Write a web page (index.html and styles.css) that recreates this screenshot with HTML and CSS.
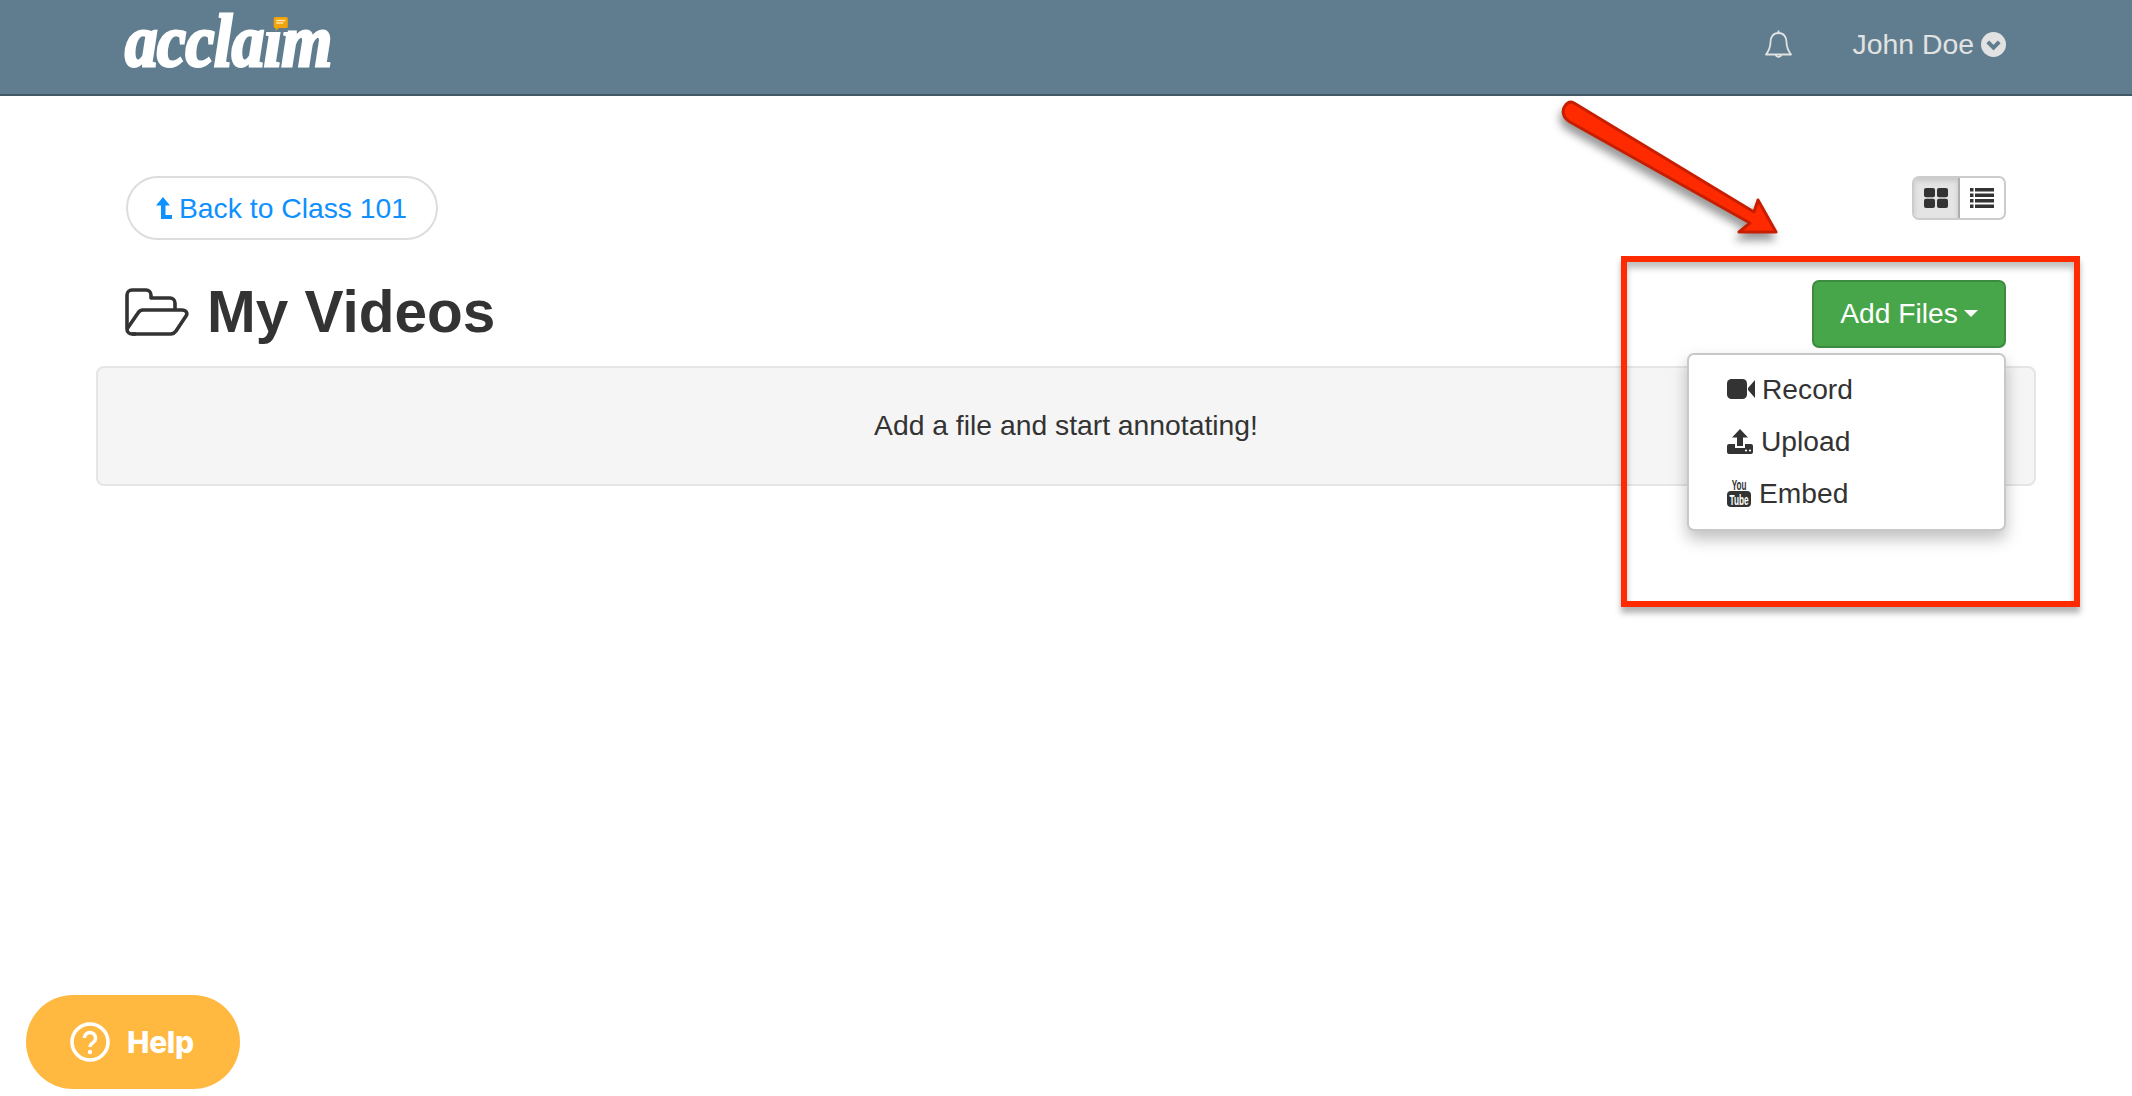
FILE: index.html
```html
<!DOCTYPE html>
<html lang="en">
<head>
<meta charset="utf-8">
<title>My Videos</title>
<link rel="stylesheet" href="styles.css">
</head>
<body>
<header class="topbar">
  <a class="logo">acclaim<svg class="logo-bubble" viewBox="0 0 14 14" preserveAspectRatio="none"><rect x="-8" y="-9" width="22" height="24" fill="#607d8f"/><path d="M1.5 0h11A1.500 1.500 0 0 1 14 1.500v8a1.500 1.500 0 0 1-1.500 1.500H5L2 14v-3h-.5A1.500 1.500 0 0 1 0 9.500v-8A1.500 1.500 0 0 1 1.500 0z" fill="#f0a30a"/><path d="M2.500 3.500h9M2.500 6h7" stroke="#fde3a8" stroke-width="1.300"/></svg></a>
  <div class="topbar-right">
    <svg class="bell" viewBox="0 0 27 29" fill="none" stroke="#e2e2e2" stroke-width="1.800"><path d="M13.500 3c-5.200 0-8 3.800-8 9 0 6-1.700 8.800-4.500 12.500h25c-2.800-3.700-4.500-6.500-4.500-12.500 0-5.200-2.800-9-8-9z" stroke-linejoin="round"/><path d="M13.500 3V.5M10.800 24.800a2.800 2.800 0 0 0 5.400 0"/></svg>
    <span class="user">John Doe</span>
    <svg class="chevron" viewBox="0 0 24 24"><circle cx="12" cy="12" r="12" fill="#e2e2e2"/><path d="M6.500 9.500l5.500 5.500 5.500-5.500" fill="none" stroke="#607d8f" stroke-width="3.800"/></svg>
  </div>
</header>

<main class="page">
  <div class="toolbar">
    <a class="back"><svg class="back-icon" viewBox="0 0 16 22"><path d="M7 0l7 8.500H9.500V18H16v4H5V8.500H0z" fill="#0e90ff"/></svg>Back to Class 101</a>
    <div class="toggle">
      <span class="toggle-btn active"><svg class="toggle-icon" viewBox="0 0 24 20" fill="#333"><rect width="11" height="9.200" rx="2"/><rect x="13" width="11" height="9.200" rx="2"/><rect y="10.800" width="11" height="9.200" rx="2"/><rect x="13" y="10.800" width="11" height="9.200" rx="2"/></svg></span>
      <span class="toggle-btn"><svg class="toggle-icon" viewBox="0 0 24 20" fill="#333"><rect width="3.500" height="3.500"/><rect x="5" width="19" height="3.500"/><rect y="5.500" width="3.500" height="3.500"/><rect x="5" y="5.500" width="19" height="3.500"/><rect y="11" width="3.500" height="3.500"/><rect x="5" y="11" width="19" height="3.500"/><rect y="16.500" width="3.500" height="3.500"/><rect x="5" y="16.500" width="19" height="3.500"/></svg></span>
    </div>
  </div>

  <div class="title-row">
    <h1 class="title"><svg class="folder" viewBox="0 0 64 48" fill="none" stroke="#333" stroke-width="3.600" stroke-linejoin="round"><path d="M11 46H7a5 5 0 0 1-5-5V7a5 5 0 0 1 5-5h14a5 5 0 0 1 5 5v3h19a5 5 0 0 1 5 5v7"/><path d="M2 41l11-16a6 6 0 0 1 5-3h39c4 0 6 3 4 6L51 43a7 7 0 0 1-5 3H7"/></svg>My Videos</h1>
    <div class="dropdown">
      <button class="add-btn">Add Files<span class="caret"></span></button>
      <ul class="menu">
        <li class="menu-item"><svg class="mi-video" viewBox="0 0 28 20" fill="#333"><rect width="20" height="20" rx="4.500"/><path d="M21 9l7-8v18l-7-8z"/></svg><span>Record</span></li>
        <li class="menu-item"><svg class="mi-upload" viewBox="0 0 26 25" fill="#333"><path d="M13 0l8 8.500h-5V17h-6V8.500H5z"/><path d="M2 15h6v4h10v-4h6a2 2 0 0 1 2 2v6a2 2 0 0 1-2 2H2a2 2 0 0 1-2-2v-6a2 2 0 0 1 2-2z"/><circle cx="19" cy="21.500" r="1.100" fill="#fff"/><circle cx="23" cy="21.500" r="1.100" fill="#fff"/></svg><span>Upload</span></li>
        <li class="menu-item"><svg class="mi-yt" viewBox="0 0 24 28"><text class="yt-you" transform="translate(12 11) scale(.58 1)" text-anchor="middle">You</text><rect y="12" width="24" height="16" rx="4" fill="#333"/><text class="yt-tube" transform="translate(12 25.500) scale(.55 1)" text-anchor="middle">Tube</text></svg><span>Embed</span></li>
      </ul>
    </div>
  </div>

  <div class="well">Add a file and start annotating!</div>
</main>

<div class="annot-box"></div>
<svg class="annot-arrow" viewBox="0 0 240 160"><path d="M14 8 L194 117 L198 105 L216 137 L179 137 L190 128 L10 27 C2 22 2 15 5 11 C7 8 10 6 14 8z" fill="#ff2a00" stroke="#c81e00" stroke-width="3" stroke-linejoin="round"/></svg>

<a class="help"><svg class="help-icon" viewBox="0 0 40 40" fill="none" stroke="#fff" stroke-width="3.600"><circle cx="20" cy="20" r="18"/><path d="M14.500 16a5.500 5.500 0 1 1 8.500 4.600c-2 1.300-3 2.200-3 4.400" stroke-width="3.400"/><circle cx="20" cy="30" r="2.200" fill="#fff" stroke="none"/></svg>Help</a>
</body>
</html>
```

FILE: styles.css
```css
* { box-sizing: border-box; }
html, body { margin: 0; height: 100%; }
body {
  background: #fff;
  color: #333;
  font-family: "Liberation Sans", Arial, sans-serif;
  overflow: hidden;
  position: relative;
}

.topbar {
  height: 96px;
  background: #607d8f;
  border-bottom: 2px solid #435866;
  display: flex;
  align-items: center;
  justify-content: space-between;
  padding: 0 126px 0 125px;
}
.logo {
  position: relative;
  color: #fff;
  font-family: "Liberation Serif", serif;
  font-style: italic;
  font-weight: 700;
  font-size: 74px;
  line-height: 74px;
  letter-spacing: -0.5px;
  -webkit-text-stroke: 3px #fff;
  margin-top: -12px;
  transform: scaleX(.88);
  transform-origin: left center;
}
.logo-bubble { position: absolute; left: 169px; top: 13px; width: 16px; height: 14px; overflow: visible; }
.topbar-right { display: flex; align-items: center; padding-bottom: 6px; }
.bell { width: 27px; height: 29px; margin-right: 60px; }
.user { font-size: 28.4px; color: #e2e2e2; margin-right: 7px; }
.chevron { width: 25px; height: 25px; }

.page { padding: 80px 96px 0; }
.toolbar {
  display: flex;
  justify-content: space-between;
  align-items: flex-start;
  padding: 0 30px 0 30px;
}
.back {
  height: 64px;
  width: 312px;
  border: 2px solid #ddd;
  border-radius: 32px;
  color: #0e90ff;
  font-size: 28.3px;
  display: flex;
  align-items: center;
  padding-left: 28px;
}
.back-icon { width: 16px; height: 22px; margin-right: 7px; }
.toggle {
  display: flex;
  width: 94px;
  height: 44px;
  border: 2px solid #ccc;
  border-radius: 7px;
  overflow: hidden;
}
.toggle-btn { flex: 1; display: flex; align-items: center; justify-content: center; }
.toggle-btn.active {
  background: #e4e4e4;
  border-right: 2px solid #adadad;
  box-shadow: inset 0 3px 5px rgba(0,0,0,.125);
}
.toggle-icon { width: 24px; height: 20px; }

.title-row {
  display: flex;
  justify-content: space-between;
  align-items: flex-start;
  padding: 40px 30px 0 29px;
  height: 126px;
}
.title {
  margin: -1px 0 0;
  font-size: 58.5px;
  line-height: 66px;
  font-weight: 700;
  color: #333;
  display: flex;
  align-items: center;
}
.folder { width: 64px; height: 48px; margin-right: 18px; }
.dropdown { position: relative; }
.add-btn {
  width: 194px;
  height: 68px;
  background: #47a64a;
  border: 2px solid #3d8b40;
  border-radius: 7px;
  color: #fff;
  font-family: inherit;
  font-size: 28.2px;
  padding: 0 0 2px;
  display: flex;
  align-items: center;
  justify-content: center;
}
.caret {
  margin-left: 6px;
  border-top: 7px solid #fff;
  border-left: 7px solid transparent;
  border-right: 7px solid transparent;
}
.menu {
  position: absolute;
  right: 0;
  top: 73px;
  z-index: 2;
  width: 319px;
  height: 178px;
  margin: 0;
  list-style: none;
  background: #fff;
  border: 2px solid #c8c8c8;
  border-radius: 7px;
  padding: 8px 0 0 38px;
  box-shadow: 0 8px 16px rgba(0,0,0,.25);
}
.menu-item {
  height: 52px;
  display: flex;
  align-items: center;
  font-size: 28.2px;
  color: #333;
}
.mi-video { width: 28px; height: 20px; margin-right: 7px; }
.mi-upload { width: 26px; height: 25px; margin-right: 8px; }
.mi-yt { width: 24px; height: 28px; margin-right: 8px; }
.yt-you { font-family: "Liberation Sans", sans-serif; font-size: 14px; font-weight: 700; fill: #333; }
.yt-tube { font-family: "Liberation Sans", sans-serif; font-size: 15px; font-weight: 700; fill: #fff; }

.well {
  height: 120px;
  background: #f5f5f5;
  border: 2px solid #e5e5e5;
  border-radius: 8px;
  display: flex;
  align-items: center;
  justify-content: center;
  font-size: 28.3px;
  color: #333;
  width: 1940px;
  padding-bottom: 2px;
}

.annot-box {
  position: absolute;
  left: 1621px;
  top: 256px;
  width: 459px;
  height: 351px;
  border: 6px solid #ff2a00;
  box-shadow: 0 6px 6px rgba(0,0,0,.3), inset 0 6px 6px rgba(0,0,0,.25);
  z-index: 3;
}
.annot-arrow {
  position: absolute;
  left: 1560px;
  top: 95px;
  width: 240px;
  height: 160px;
  overflow: visible;
  filter: drop-shadow(-2px 7px 4px rgba(0,0,0,.4));
  z-index: 3;
}

.help {
  position: absolute;
  left: 26px;
  top: 995px;
  width: 214px;
  height: 94px;
  background: #ffb840;
  border-radius: 47px;
  color: #fff;
  font-family: Inter, sans-serif;
  font-weight: 800;
  font-size: 30px;
  letter-spacing: -0.3px;
  display: flex;
  align-items: center;
  padding-left: 44px;
}
.help-icon { width: 40px; height: 40px; margin-right: 17px; }
```
